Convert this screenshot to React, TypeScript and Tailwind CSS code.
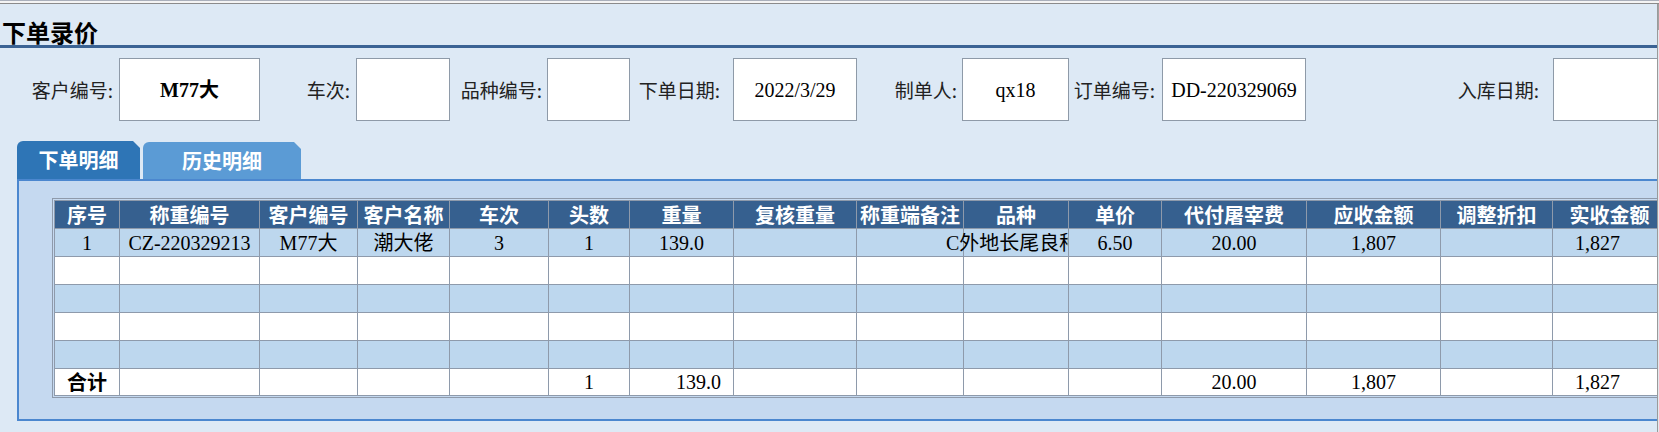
const cols =
  'grid grid-cols-[65px_140px_98px_92px_99px_81px_104px_123px_107px_105px_93px_145px_134px_112px_114px]';

const headers = [
  '序号',
  '称重编号',
  '客户编号',
  '客户名称',
  '车次',
  '头数',
  '重量',
  '复核重量',
  '称重端备注',
  '品种',
  '单价',
  '代付屠宰费',
  '应收金额',
  '调整折扣',
  '实收金额',
];

const firstRow = [
  '1',
  'CZ-220329213',
  'M77大',
  '潮大佬',
  '3',
  '1',
  '139.0',
  '',
  '',
  'C外地长尾良种',
  '6.50',
  '20.00',
  '1,807',
  '',
  '1,827',
];

const emptyRow = headers.map(() => '');

const totalRow = ['合计', '', '', '', '', '1', '139.0', '', '', '', '', '20.00', '1,807', '', '1,827'];

const cellBase = 'border-r border-b border-[#8e9aab] flex items-center justify-center whitespace-nowrap leading-none';

function FormField({
  label,
  labelWidth,
  labelPad,
  boxWidth,
  value,
  bold,
}: {
  label: string;
  labelWidth: string;
  labelPad: string;
  boxWidth: string;
  value?: string;
  bold?: boolean;
}) {
  return (
    <>
      <div className={`${labelWidth} ${labelPad} shrink-0 text-right text-[19px] leading-none text-[#222] whitespace-nowrap`}>
        {label}
      </div>
      <div
        className={`${boxWidth} h-[63px] shrink-0 border border-[#8e9aa8] bg-white flex items-center justify-center text-[20px] leading-none text-black font-['Liberation_Serif','Noto_Sans_CJK_SC',serif] ${
          bold ? 'font-bold' : ''
        }`}
      >
        {value}
      </div>
    </>
  );
}

function DataRow({ cells, bg, height }: { cells: string[]; bg: string; height: string }) {
  const isTotal = cells[0] === '合计';
  return (
    <div className={`${cols} ${bg} ${height}`}>
      {cells.map((c, i) => {
        if (i === 9 && c) {
          // text runs into the previous column and is cut at the right border
          return (
            <div key={i} className="border-r border-b border-[#8e9aab] flex items-center leading-none">
              <div className="-ml-[18px] overflow-hidden whitespace-nowrap text-[20px] text-black">{c}</div>
            </div>
          );
        }
        let extra = '';
        if (isTotal && i === 0) extra = "font-bold font-['Noto_Sans_CJK_SC',sans-serif]";
        if (isTotal && i === 6) extra = 'justify-end pr-[12px]';
        if (i === 14) extra = 'justify-start pl-[22px]';
        return (
          <div key={i} className={`${cellBase} text-[20px] text-black ${extra}`}>
            {c}
          </div>
        );
      })}
    </div>
  );
}

export default function App() {
  return (
    <div className="w-[1659px] h-[432px] overflow-hidden bg-[#dde9f5] flex flex-col font-['Noto_Sans_CJK_SC',sans-serif]">
      {/* window top edge */}
      <div className="h-[1px] shrink-0 bg-[#aab0bc]" />
      <div className="h-[2px] shrink-0 bg-[#f4f4f4]" />
      <div className="h-[1px] shrink-0 bg-[#8b8b8b]" />

      <div className="flex flex-1 min-h-0">
        <div className="w-[1657px] shrink-0 overflow-hidden">
          {/* Title */}
          <div className="h-[41px] flex items-end pl-[2px]">
            <h1 className="text-[24px] leading-none font-bold text-black pb-[1px]">下单录价</h1>
          </div>
          <div className="h-[3px] bg-[#3b6394]" />

          {/* Header fields */}
          <div className="mt-[10px] flex h-[63px] items-center">
            <FormField label="客户编号:" labelWidth="w-[119px]" labelPad="pr-[6px]" boxWidth="w-[141px]" value="M77大" bold />
            <FormField label="车次:" labelWidth="w-[96px]" labelPad="pr-[6px]" boxWidth="w-[94px]" />
            <FormField label="品种编号:" labelWidth="w-[97px]" labelPad="pr-[5px]" boxWidth="w-[83px]" />
            <FormField label="下单日期:" labelWidth="w-[103px]" labelPad="pr-[13px]" boxWidth="w-[124px]" value="2022/3/29" />
            <FormField label="制单人:" labelWidth="w-[105px]" labelPad="pr-[5px]" boxWidth="w-[107px]" value="qx18" />
            <FormField label="订单编号:" labelWidth="w-[93px]" labelPad="pr-[7px]" boxWidth="w-[144px]" value="DD-220329069" />
            <FormField label="入库日期:" labelWidth="w-[247px]" labelPad="pr-[14px]" boxWidth="w-[150px]" />
          </div>

          {/* Tabs */}
          <div className="mt-[20px] ml-[17px] flex items-end gap-[3px] h-[38px]">
            <div className="w-[123px] h-[38px] bg-[#2e75b6] rounded-tl-[6px] [clip-path:polygon(0_0,calc(100%-7px)_0,100%_7px,100%_100%,0_100%)] flex items-center justify-center text-[20px] leading-none font-bold text-white">
              下单明细
            </div>
            <div className="w-[158px] h-[37px] bg-[#5b9bd5] rounded-tl-[6px] [clip-path:polygon(0_0,calc(100%-7px)_0,100%_7px,100%_100%,0_100%)] flex items-center justify-center text-[20px] leading-none font-bold text-white">
              历史明细
            </div>
          </div>

          {/* Panel */}
          <div className="ml-[17px] w-[1700px] border-2 border-r-0 border-[#4b87cf] bg-[#c5d9f0] pt-[17px] pb-[21px] pl-[33px]">
            <div className="w-fit border border-[#8e9aab] p-[1px]">
              <div className="border-l border-t border-[#8e9aab] font-['Liberation_Serif','Noto_Sans_CJK_SC',serif]">
                <div className={`${cols} h-[28px] bg-[#36608f]`}>
                  {headers.map((h) => (
                    <div
                      key={h}
                      className={`${cellBase} overflow-hidden font-['Noto_Sans_CJK_SC',sans-serif] text-[20px] font-bold text-white`}
                    >
                      {h}
                    </div>
                  ))}
                </div>
                <DataRow cells={firstRow} bg="bg-[#bdd7ee]" height="h-[28px]" />
                <DataRow cells={emptyRow} bg="bg-white" height="h-[28px]" />
                <DataRow cells={emptyRow} bg="bg-[#bdd7ee]" height="h-[28px]" />
                <DataRow cells={emptyRow} bg="bg-white" height="h-[28px]" />
                <DataRow cells={emptyRow} bg="bg-[#bdd7ee]" height="h-[28px]" />
                <DataRow cells={totalRow} bg="bg-white" height="h-[27px]" />
              </div>
            </div>
          </div>
        </div>

        {/* window right edge */}
        <div className="w-[2px] shrink-0 flex flex-col border-l border-[#9a9a9a] bg-[#e4e8ee]">
          <div className="h-[26px] bg-[#a3a3a3]" />
        </div>
      </div>
    </div>
  );
}
